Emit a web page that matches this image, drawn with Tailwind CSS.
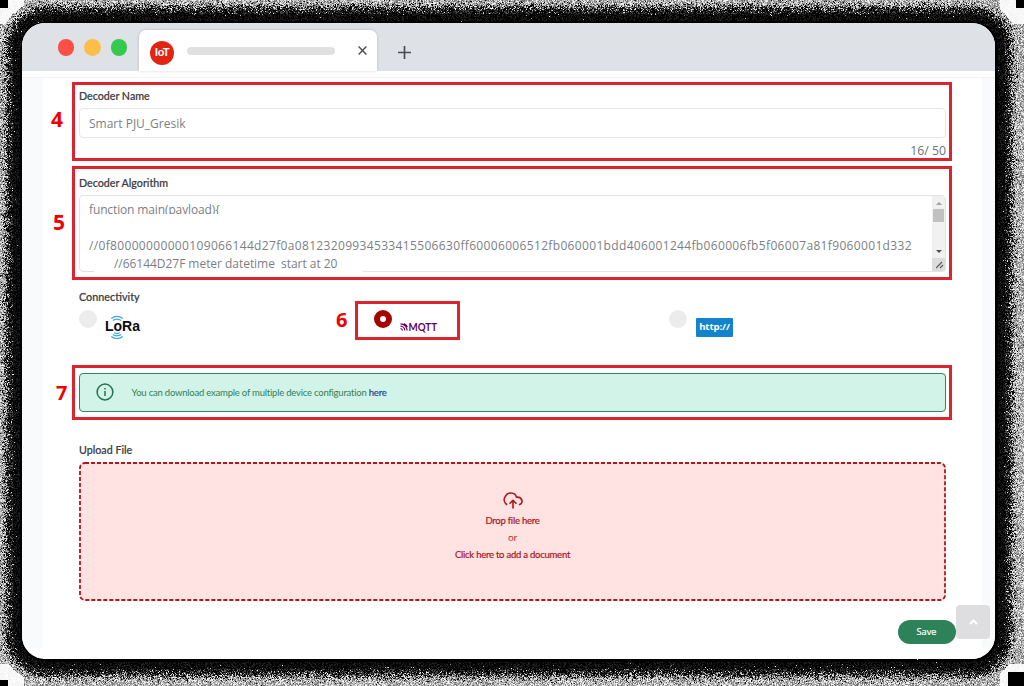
<!DOCTYPE html>
<html lang="en">
<head>
<meta charset="utf-8">
<title>Decoder form</title>
<script src="https://cdn.jsdelivr.net/npm/@tailwindcss/browser@4"></script>
</head>
<body class="relative h-[686px] w-[1024px] overflow-hidden bg-white pt-[23px] pl-[22px] font-['Lato',sans-serif]">
<canvas id="shadow" width="1024" height="686" class="absolute inset-0"></canvas>

<div class="relative flex h-[636px] w-[973px] flex-col overflow-hidden rounded-[23px] bg-white">
  <!-- Tab bar -->
  <header class="flex h-12 shrink-0 items-end bg-[#dee1e6] pl-[35.500px]">
    <div class="flex h-full w-[81.500px] items-start gap-[10px] pt-4">
      <span class="size-[16.5px] rounded-full bg-[#fa5048]"></span>
      <span class="size-[16.5px] rounded-full bg-[#fbbe49]"></span>
      <span class="size-[16.5px] rounded-full bg-[#35ca4f]"></span>
    </div>
    <div class="flex h-[41px] w-[238px] items-center rounded-t-[7px] bg-white pl-[11px] shadow-[0_0_3px_rgba(0,0,0,0.18)]">
      <span class="mt-[4px] flex size-6 items-center justify-center rounded-full bg-[#e22412] pb-px text-[11.5px] font-bold tracking-[-0.2px] text-white">IoT</span>
      <span class="ml-[13px] h-2 w-[148px] rounded-full bg-[#e0e0e0]"></span>
      <svg class="ml-[23px] size-[9px]" viewBox="0 0 9 9" fill="none" stroke="#4d4d4d" stroke-width="1.4"><path d="M.6.6l7.8 7.8M8.4.6L.6 8.4"/></svg>
    </div>
    <svg class="mb-[12.5px] ml-[21px] size-[13px]" viewBox="0 0 13 13" fill="none" stroke="#4d4d4d" stroke-width="1.7"><path d="M6.5 0v13M0 6.5h13"/></svg>
  </header>
  <div class="h-[7px] shrink-0 border-b border-[#f0f3f6]"></div>

  <!-- Page -->
  <div class="h-[570px] shrink-0 bg-[#f8fafc] pr-[13px] pl-[21px]">
    <main class="flex h-[581px] flex-col bg-white pr-9 pl-9 text-[#3a3d42]">
      <label class="mt-[10px] h-5 text-[10.7px] leading-[16px] font-medium [-webkit-text-stroke:0.2px]">Decoder Name</label>
      <div class="flex h-[30px] w-[867px] items-center rounded border border-[#e4e6ea] pt-px pl-[9px] font-['Open_Sans',sans-serif] text-[12px] text-[#7b7f85]"><span class="whitespace-nowrap">Smart PJU_Gresik</span></div>
      <div class="flex h-[37px] w-[867px] justify-end pt-1 font-['Open_Sans',sans-serif] text-[12.3px] leading-[18px] text-[#6c7177]">16/ 50</div>
      <label class="h-5 text-[10.7px] leading-[16px] font-medium [-webkit-text-stroke:0.2px]">Decoder Algorithm</label>
      <div class="relative flex h-[77px] w-[867px] rounded border border-[#e0e3e7] font-['Open_Sans',sans-serif] text-[12px] text-[#7b7f85]">
        <span class="absolute -bottom-px left-[14px] h-px w-[269px] bg-white"></span>
        <div class="flex w-[852px] flex-col pt-[5px] pl-[9px] leading-[18px] whitespace-pre">
          <div class="h-[13px] shrink-0 overflow-hidden tracking-[-0.13px]">function main(payload){</div>
          <div class="mt-[23px] h-[18px] shrink-0 tracking-[0.34px]">//0f80000000000109066144d27f0a08123209934533415506630ff60006006512fb060001bdd406001244fb060006fb5f06007a81f9060001d332</div>
          <div class="h-[16px] shrink-0 pl-[25px] tracking-[-0.04px]">//66144D27F meter datetime  start at 20</div>
        </div>
        <div class="flex w-[13px] shrink-0 flex-col items-center bg-[#f1f1f1]">
          <svg class="mt-[6px] h-[3px] w-[6px]" viewBox="0 0 6 3"><path d="M0 3L3 0l3 3z" fill="#a0a0a0"/></svg>
          <span class="mt-1 h-[13px] w-[11px] bg-[#c1c1c1]"></span>
          <svg class="mt-[28px] h-[3px] w-[6px]" viewBox="0 0 6 3"><path d="M0 0l3 3 3-3z" fill="#505050"/></svg>
          <span class="mt-[5px] flex h-[13px] w-[13px] shrink-0 items-end justify-end bg-[#dcdcdc] pr-[1px] pb-[2px]"><svg class="size-[8px]" viewBox="0 0 8 8" stroke="#555" stroke-width="1.1"><path d="M0 7L6 1M4 7l3-3"/></svg></span>
        </div>
      </div>
      <label class="mt-[17px] h-4 text-[10.8px] leading-[16px] font-medium [-webkit-text-stroke:0.2px]">Connectivity</label>
      <div class="flex h-[68px] items-start pt-[5px]">
        <div class="flex w-[295px] items-start">
          <span class="size-[18px] rounded-full bg-[#ececec]"></span>
          <svg class="mt-[5px] ml-[8px] h-[25px] w-[38px]" viewBox="0 0 38 25" fill="none" stroke="#35a5d5" stroke-width="1.2">
            <path d="M6.3 3.4Q12 -.8 17.7 3.4M7.8 5.6Q12 2.7 16.2 5.6M9.2 17.800Q12 19.300 14.8 17.800M7.8 19.600Q12 22.300 16.2 19.600M6.3 21.4Q12 25.6 17.7 21.4"/>
            <text x="0" y="15.500" fill="#0c0c0c" stroke="none" font-family="Liberation Sans" font-weight="700" font-size="14" textLength="35" lengthAdjust="spacingAndGlyphs">LoRa</text>
          </svg>
        </div>
        <div class="flex w-[295px] items-start">
          <span class="flex size-[18px] items-center justify-center rounded-full bg-[#a30404]"><span class="size-[6px] rounded-full bg-white"></span></span>
          <svg class="mt-[13px] ml-[8px] h-[8px] w-[8px]" viewBox="0 0 9 9" fill="none" stroke="#660066" stroke-width="1.3"><path d="M.5 6.200A2.500 2.500 0 0 1 2.800 8.5M.5 3.600A5 5 0 0 1 5.400 8.5M.5 1A7.5 7.5 0 0 1 8 8.5M4.300 .7Q7 1.8 8.4 4.500"/></svg>
          <svg class="mt-[10px] h-[13px] w-[30px]" viewBox="0 0 30 13"><text x="0.5" y="11" fill="#660066" font-family="Lato" font-weight="700" font-size="10.500" textLength="28.500" lengthAdjust="spacingAndGlyphs">MQTT</text></svg>
        </div>
        <div class="flex items-start">
          <span class="size-[18px] rounded-full bg-[#ececec]"></span>
          <span class="mt-[8px] ml-[9px] flex h-[19px] w-[37px] items-center justify-center rounded-[1px] bg-[#1583cb] pb-px font-['Open_Sans',sans-serif] text-[9.6px] font-bold tracking-[-0.1px] text-white">http://</span>
        </div>
      </div>
      <div class="flex h-[39px] w-[867px] items-center rounded border border-[#3a8062] bg-[#d2f4e8] pl-[15.500px]">
        <svg class="mb-px size-[18px]" viewBox="0 0 18 18" fill="none" stroke="#25714f" stroke-width="1.5"><circle cx="9" cy="9" r="7.9"/><path d="M9 8v5M9 5v1.5"/></svg>
        <p class="mt-px ml-[18px] text-[9.5px] tracking-[-0.215px] whitespace-nowrap text-[#2f7e5c]">You can download example of multiple device configuration <a class="text-[#26458f] [-webkit-text-stroke:0.2px]">here</a></p>
      </div>
      <label class="mt-[30px] h-5 text-[10.7px] leading-[16px] font-medium [-webkit-text-stroke:0.2px]">Upload File</label>
      <div class="relative flex h-[139px] w-[867px] flex-col items-center rounded-md bg-[#ffe3e3] pt-[30px] text-[9.5px] leading-[16px] tracking-[-0.24px] text-[#ae1418] [-webkit-text-stroke:0.2px]">
        <svg class="absolute inset-0 h-[139px] w-[867px]" fill="none"><rect x="1" y="1" width="865" height="137" rx="5" stroke="#aa1a20" stroke-width="1.8" stroke-dasharray="4 2"/></svg>
        <svg class="h-[17px] w-[20px]" viewBox="0 0 20 17" fill="none" stroke="#ae1418" stroke-width="1.6" stroke-linecap="round" stroke-linejoin="round"><path d="M3.600 12.500A5.900 5.900 0 0 1 2 4.8C4.600-.6 12.300-.2 13.400 5.200C19 4.500 21 11.200 16.600 12.500M10 16V8.700M7 11.300l3-3 3 3"/></svg>
        <span class="mt-[4px] h-[17px]">Drop file here</span>
        <span class="h-[17px] font-['Open_Sans',sans-serif] [-webkit-text-stroke:0]">or</span>
        <span>Click here to add a document</span>
      </div>
      <button class="mt-[19px] ml-[818.500px] h-6 w-[58px] shrink-0 rounded-full bg-[#2d8259] font-['Open_Sans',sans-serif] text-[9.2px] font-medium text-white [-webkit-text-stroke:0.2px]">Save</button>
    </main>
  </div>
</div>

<!-- Scroll-to-top button -->
<div class="absolute top-[605px] left-[956px] flex h-[34px] w-[34px] items-center justify-center rounded bg-[#dadadd]/90">
  <svg class="h-[6px] w-[9px]" viewBox="0 0 9 6" fill="none" stroke="#fff" stroke-width="2"><path d="M1 5l3.500-3.500L8 5"/></svg>
</div>

<!-- Step callouts -->
<div class="absolute top-[82px] left-[72px] h-[79px] w-[880px] border-[3px] border-[#dc2430]"></div>
<div class="absolute top-[166px] left-[72px] h-[114px] w-[880px] border-[3px] border-[#dc2430]"></div>
<div class="absolute top-[301px] left-[355px] h-[39px] w-[105px] border-[3px] border-[#dc2430]"></div>
<div class="absolute top-[365px] left-[72px] h-[55px] w-[880px] border-[3px] border-[#dc2430]"></div>
<div class="absolute top-[105px] left-[51px] font-['Open_Sans'] text-[21px] leading-[28px] font-bold text-[#f00000]">4</div>
<div class="absolute top-[208px] left-[53px] font-['Open_Sans'] text-[21px] leading-[28px] font-bold text-[#f00000]">5</div>
<div class="absolute top-[306px] left-[336px] font-['Open_Sans'] text-[20px] leading-[28px] font-bold text-[#f00000]">6</div>
<div class="absolute top-[379px] left-[56px] font-['Open_Sans'] text-[20px] leading-[28px] font-bold text-[#f00000]">7</div>

<script>
// Dithered drop shadow around the window
const c = document.getElementById('shadow').getContext('2d');
const im = c.createImageData(1024, 686);
let s = 12345;
const rnd = () => (s = (s * 1664525 + 1013904223) >>> 0) / 4294967296;
for (let y = 0; y < 686; y++) for (let x = 0; x < 1024; x++) {
  const dx = Math.max(45 - x, x - 972, 0), dy = Math.max(46 - y, y - 636, 0);
  const d = Math.hypot(dx, dy) - 23;
  const p = 1 / (1 + Math.exp(-(d - 16.500) / 2));
  let v;
  if (rnd() < p) v = 100 + rnd() * 155;
  else v = d > 2 && rnd() < 0.6 ? rnd() * (d > 9 ? 90 : 40) : 0;
  const corner = (x < 24 || x > 999) && (y < 24 || y > 663);
  if (corner && d > 23) v = 240 + rnd() * 15;
  const left = x < 8, right = x > 1015;
  if ((left || right) && y < 8) v = 0;
  if (left && y > 679) v = 0;
  if (x > 1007 && y > 671) v = 0;
  const i = (y * 1024 + x) * 4;
  im.data[i] = im.data[i + 1] = im.data[i + 2] = v;
  im.data[i + 3] = 255;
}
c.putImageData(im, 0, 0);
</script>
</body>
</html>
